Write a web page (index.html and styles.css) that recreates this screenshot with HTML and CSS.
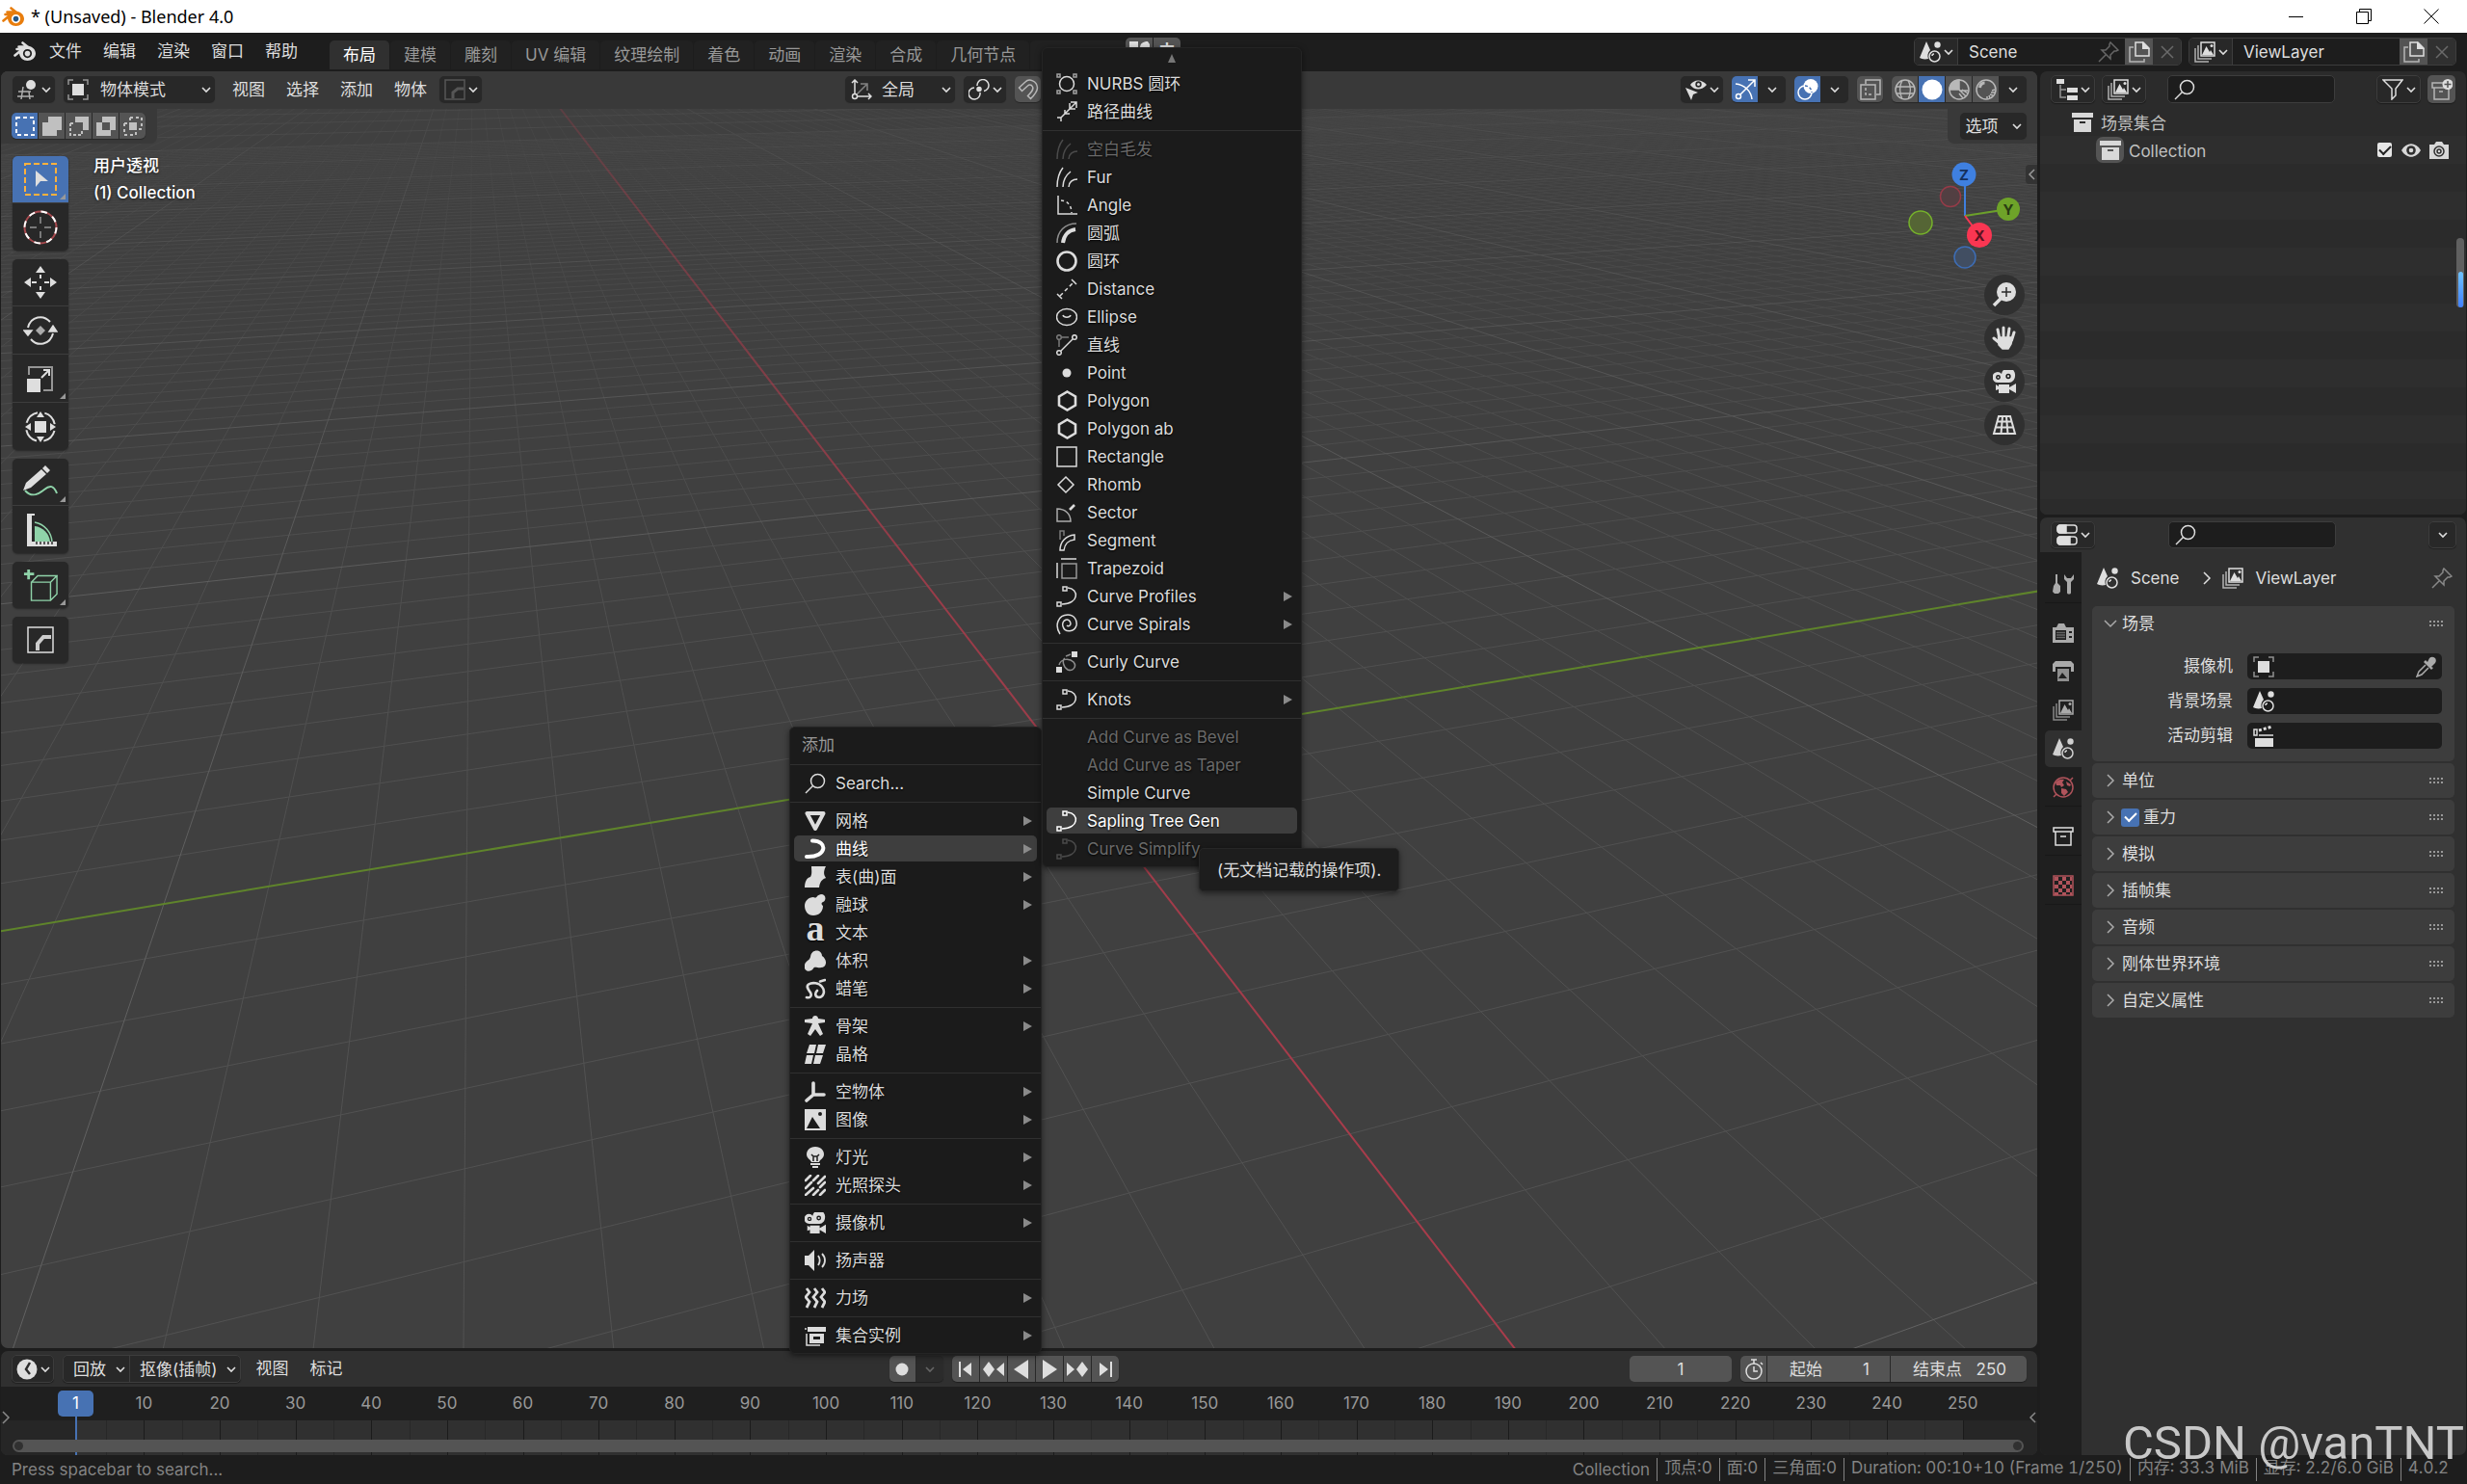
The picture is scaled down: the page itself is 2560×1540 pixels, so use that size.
FILE: index.html
```html
<!DOCTYPE html>
<html lang="zh-CN">
<head>
<meta charset="utf-8">
<title>* (Unsaved) - Blender 4.0</title>
<link rel="stylesheet" href="styles.css">
</head>
<body>
<svg class="sprite" aria-hidden="true">
  <symbol id="blender" viewBox="0 0 24 24"><path d="M1.500 16.500 9.500 10H3.500M5.500 7.500H14.500L9.500 3.500" fill="none" stroke="currentColor" stroke-width="2.600" stroke-linecap="round" stroke-linejoin="round"/><path d="M14 6.500C19 7 23 10 23 14.500S19 22 14.500 22 6.500 19 6 14.500C6 11 10 7 14 6.500ZM14.500 10A4.600 4.600 0 1 0 14.500 19.200 4.600 4.600 0 1 0 14.500 10Z" fill="currentColor" fill-rule="evenodd" stroke="none"/><circle class="pupil" cx="14.500" cy="14.600" r="2.800" stroke="none"/></symbol>
  <symbol id="chev" viewBox="0 0 10 10"><path d="M1 3 5 7 9 3" fill="none" stroke="currentColor" stroke-width="1.600"/></symbol>
  <symbol id="chev-right" viewBox="0 0 10 16"><path d="M2 2 8 8 2 14" fill="none" stroke="currentColor" stroke-width="1.500"/></symbol>
  <symbol id="chev-left" viewBox="0 0 10 16"><path d="M8 3 3 8 8 13" fill="none" stroke="currentColor" stroke-width="1.500"/></symbol>
  <symbol id="search" viewBox="0 0 22 22"><circle cx="13.500" cy="8.500" r="7"/><path d="M8.500 13.500 1 21"/></symbol>
  <symbol id="view3d" viewBox="0 0 22 22"><path d="M1 13H14M0 18H17M6 8 4 21M12 13 13 21" stroke-opacity=".75"/><circle cx="14" cy="6" r="5" fill="currentColor" stroke="none"/></symbol>
  <symbol id="object" viewBox="0 0 22 22"><path d="M1 6V1H6M16 1H21V6M21 16V21H16M6 21H1V16" stroke-opacity=".6"/><path d="M5 5H17V17H5Z" fill="currentColor" stroke="none"/></symbol>
  <symbol id="bevel" viewBox="0 0 22 22"><path d="M1 1H21V21H1Z"/><path d="M9 20V14L14 10H20" stroke-width="3"/></symbol>
  <symbol id="orient" viewBox="0 0 22 22"><path d="M4 16V1M1 4 4 1 7 4M6 18H21M18 15 21 18 18 21"/><circle cx="4" cy="18" r="2.500"/><path d="M6 16 16 6M10 5H17V12" stroke-opacity=".5"/></symbol>
  <symbol id="pivot" viewBox="0 0 22 22"><path d="M9 7A6 6 0 1 1 16 12.500M12 14A6 6 0 1 1 6 9"/><circle cx="11" cy="10.500" r="2" fill="currentColor"/></symbol>
  <symbol id="snap" viewBox="0 0 22 22"><path d="M1.500 9 8 3C12-1 20 2 20.500 9 20.500 13 17 17 13.500 20.500L10.500 17.500C14 14 17 11 15.500 8 14 5 11.500 6 10.500 7L4.500 12.500Z"/></symbol>
  <symbol id="eyecursor" viewBox="0 0 22 22"><path d="M5 6C9 0 17 0 22 6 17 12 9 12 5 6Z" fill="currentColor" stroke="none"/><circle cx="13.500" cy="5.500" r="3.200" fill="#2b2b2b" stroke="none"/><circle cx="13.500" cy="5.500" r="1.500" fill="currentColor" stroke="none"/><path d="M0 9 13 14 8 16 6 22Z" fill="currentColor" stroke="none"/></symbol>
  <symbol id="gizmo" viewBox="0 0 22 22"><path d="M1 5C10 6 17 12 18 21M6 16 21 1M14 1H21V8"/><circle cx="4" cy="18" r="2.500"/></symbol>
  <symbol id="overlay" viewBox="0 0 22 22"><circle cx="14" cy="7.500" r="7.500" fill="currentColor" stroke="none"/><circle cx="8" cy="14" r="7"/><path d="M8 7A7 7 0 0 1 15 14" stroke="#4772b3" stroke-dasharray="3 2"/></symbol>
  <symbol id="xray" viewBox="0 0 22 22"><path d="M1 6H16V21H1ZM6 5V1H21V16H17"/><path d="M6 9V16H12" stroke-dasharray="3 2"/></symbol>
  <symbol id="wire" viewBox="0 0 22 22"><circle cx="11" cy="11" r="10"/><path d="M1 8H21M2 15H20M8 1C5 7 5 15 8 21M14 1C17 7 17 15 14 21"/></symbol>
  <symbol id="solid" viewBox="0 0 22 22"><circle cx="11" cy="11" r="10.500" fill="currentColor" stroke="none"/></symbol>
  <symbol id="matprev" viewBox="0 0 22 22"><circle cx="11" cy="11" r="10"/><path d="M11 1V11H1C1 5 5 1 11 1Z" fill="currentColor"/><path d="M11 11 18 18M11 15 15 20M14 11 20 15M11 12H20"/></symbol>
  <symbol id="rendered" viewBox="0 0 22 22"><circle cx="11" cy="11" r="10"/><path d="M4.500 9C5 6 7 4 9.500 4" stroke-width="3"/><path d="M20 11 17 12M20 14 16 14M18 17 15 16M12 20V18M15 20 14 17"/></symbol>
  <symbol id="scene" viewBox="0 0 22 22"><path d="M7 0 11 9C8 12 8 15 9 18 5 19 2 18 0 17Z" fill="currentColor" stroke="none"/><circle cx="18.500" cy="3.500" r="3.200" fill="currentColor" stroke="none"/><circle cx="15.500" cy="15.500" r="5.500"/><path d="M13 15C13 14 14 13 15 13"/></symbol>
  <symbol id="viewlayer" viewBox="0 0 22 22"><path d="M7 1H21V15H7Z"/><path d="M8 14 12.500 5 16 11 17 9 20 14Z" fill="currentColor" stroke="none"/><circle cx="18" cy="4.500" r="1.500" fill="currentColor" stroke="none"/><path d="M4 4V18H18M1 7V21H15" stroke-opacity=".75"/></symbol>
  <symbol id="pin" viewBox="0 0 22 22"><path d="M13 1 21 9 19 10 17 10 13 14 13 18 4 9 8 9 12 5 12 3ZM8 14 1 21"/></symbol>
  <symbol id="copy" viewBox="0 0 22 22"><path d="M7 1H15L21 7V15H7Z"/><path d="M14 0 22 8H14Z" fill="currentColor" stroke="none"/><path d="M5 6H1V21H16V18" stroke-opacity=".7"/></symbol>
  <symbol id="x" viewBox="0 0 22 22"><path d="M5 5 17 17M17 5 5 17"/></symbol>
  <symbol id="outliner" viewBox="0 0 22 22"><path d="M0 0H8V5H0ZM11 9H22V14H11ZM11 17H22V22H11Z" fill="currentColor" stroke="none"/><path d="M4 6V19H10M4 11H10" stroke-opacity=".6"/></symbol>
  <symbol id="filter" viewBox="0 0 22 22"><path d="M1 1H21L14 10V17L10 21V10Z"/></symbol>
  <symbol id="newcol" viewBox="0 0 22 22"><path d="M12 4H1V9H20M3 9V21H18V10M8 13H12" stroke-opacity=".7"/><circle cx="17" cy="5.500" r="5.500" fill="currentColor" stroke="none"/><path d="M17 2V9M13.500 5.500H20.500" stroke="#545454"/></symbol>
  <symbol id="collection" viewBox="0 0 22 22"><path d="M0 1H22V6H0ZM2 8H20V21H2ZM8 10V12H14V10Z" fill="currentColor" fill-rule="evenodd" stroke="none"/></symbol>
  <symbol id="collection-o" viewBox="0 0 22 22"><path d="M1 2H21V6H1ZM3 6V20H19V6M8 11H14"/></symbol>
  <symbol id="eye" viewBox="0 0 22 22"><path d="M1 11C6 2 16 2 21 11 16 20 6 20 1 11Z" fill="currentColor" stroke="none"/><circle cx="11" cy="11" r="4.800" fill="#2e2e2e" stroke="none"/><circle cx="11" cy="11" r="2.300" fill="currentColor" stroke="none"/></symbol>
  <symbol id="photo" viewBox="0 0 22 22"><path d="M1 5H6L8 2H14L16 5H21V20H1Z" fill="currentColor" stroke="none"/><circle cx="11" cy="12" r="5" stroke="#2e2e2e"/><circle cx="11" cy="12" r="2" stroke="#2e2e2e"/></symbol>
  <symbol id="props" viewBox="0 0 22 22"><rect x="1" y="1" width="20" height="8" rx="3"/><path d="M4 1H10V9H4C0 9 0 1 4 1ZM4 13H14V21H4C0 21 0 13 4 13Z" fill="currentColor"/><rect x="1" y="13" width="20" height="8" rx="3"/></symbol>
  <symbol id="tool" viewBox="0 0 22 22"><path d="M3 1H5V10H3ZM1 13 3 10H5L8 13V19L6 21H2L0 19Z" fill="currentColor" stroke="none"/><path d="M12 1V6L15 9V20C15 22 19 22 19 20V9L22 6V1L19 5H15Z" fill="currentColor" stroke="none"/></symbol>
  <symbol id="render" viewBox="0 0 22 22"><path d="M0 5H4L6 1H12L14 5H22V21H0ZM3 8V18H14V8ZM17 9H20V11H17ZM17 14H20V16H17Z" fill="currentColor" fill-rule="evenodd" stroke="none"/><path d="M4 10.500H13M4 13H13M4 15.500H13" stroke-opacity=".5"/></symbol>
  <symbol id="printer" viewBox="0 0 22 22"><path d="M0 3 3 0H19L22 3V11H19V6H3V11H0Z" fill="currentColor" stroke="none"/><path d="M5 8H17V21H5ZM6 18 10 12 15 18Z" fill="currentColor" fill-opacity=".8" fill-rule="evenodd" stroke="none"/></symbol>
  <symbol id="world" viewBox="0 0 22 22"><circle cx="11" cy="11" r="10"/><path d="M3 6C5 3 9 2 12 3L10 6 12 9 9 11 8 9 4 9ZM9 12 14 13 16 16 12 20 9 17ZM14 5 19 8 18 10 15 9Z" fill="currentColor" stroke="none"/><path d="M18 4 21 1M4 18 1 21"/></symbol>
  <symbol id="texture" viewBox="0 0 22 22"><path d="M1 1H21V21H1Z"/><path d="M2 2H6V6H2ZM10 2H14V6H10ZM6 6H10V10H6ZM14 6H18V10H14ZM2 10H6V14H2ZM10 10H14V14H10ZM6 14H10V18H6ZM14 14H18V18H14ZM2 18H6V21H2ZM10 18H14V21H10ZM18 2H20V6H18ZM18 10H20V14H18ZM18 18H20V21H18Z" fill="currentColor" stroke="none"/></symbol>
  <symbol id="dropper" viewBox="0 0 22 22"><path d="M14 2C17-1 23 2 20 7L16 11 18 12 16 14 8 6 10 4 12 6Z" fill="currentColor" stroke="none"/><path d="M10 9 3 16 1 21 6 19 13 12"/></symbol>
  <symbol id="clip" viewBox="0 0 22 22"><path d="M2 13H21V22H2Z" fill="currentColor" stroke="none"/><path d="M6 10H21M1 4H4V10H1Z"/><path d="M6 5 20 1" stroke-width="3" stroke-dasharray="3 2"/></symbol>
  <symbol id="clock" viewBox="0 0 22 22"><circle cx="11" cy="11" r="10.500" fill="currentColor" stroke="none"/><path d="M14 4 10 11 14 16" stroke="#2b2b2b" stroke-width="2.500"/></symbol>
  <symbol id="stopwatch" viewBox="0 0 22 22"><circle cx="11" cy="13" r="8"/><path d="M8 1H14M11 1V5M18 4 20 6M11 8V13H15"/></symbol>

  <symbol id="nurbs" viewBox="0 0 22 22"><circle cx="11" cy="11" r="7.500"/><path d="M1 1H4V4H1ZM18 1H21V4H18ZM1 18H4V21H1ZM18 18H21V21H18Z" stroke-opacity=".7"/></symbol>
  <symbol id="path" viewBox="0 0 22 22"><path d="M5 17 21 1M15 1H21V7M14 2V8H20M9 13V9M9 13H14M1 17H5V21"/></symbol>
  <symbol id="fur" viewBox="0 0 22 22"><path d="M1 21C1 13 3 6 7 1M7 21C7 14 10 9 15 5M13 21C13 16 17 13 22 13"/></symbol>
  <symbol id="angle" viewBox="0 0 22 22"><path d="M2 1V20H22"/><path d="M5 6C12 6 16 12 16 19" stroke-dasharray="3 3"/></symbol>
  <symbol id="arc" viewBox="0 0 22 22"><path d="M1 21C1 9 9 1 21 1" stroke-opacity=".6"/><path d="M7 21C8 13 13 8 20 7" stroke-width="4"/></symbol>
  <symbol id="ring" viewBox="0 0 22 22"><circle cx="11" cy="11" r="9.500" stroke-width="2.600"/></symbol>
  <symbol id="distance" viewBox="0 0 22 22"><path d="M16 1 21 6M1 16 6 21"/><path d="M4 18 19 3" stroke-dasharray="4 3"/></symbol>
  <symbol id="ellipse" viewBox="0 0 22 22"><ellipse cx="11" cy="11" rx="10.500" ry="8.500"/><path d="M7 9C8 12 14 12 15 9"/></symbol>
  <symbol id="line" viewBox="0 0 22 22"><path d="M5 17 17 5"/><circle cx="3" cy="19" r="2.300"/><circle cx="19" cy="3" r="2.300"/><path d="M6 3H13M3 6V13" stroke-opacity=".5"/><circle cx="3" cy="3" r="2.300" stroke-opacity=".5"/></symbol>
  <symbol id="point" viewBox="0 0 22 22"><circle cx="11" cy="11" r="4.500" fill="currentColor" stroke="none"/></symbol>
  <symbol id="hex" viewBox="0 0 22 22"><path d="M11.500 1.500 20 6.500V15.500L11.500 20.500 3 15.500V6.500Z" stroke-width="2.600"/></symbol>
  <symbol id="rect" viewBox="0 0 22 22"><path d="M1 1H21V21H1Z"/></symbol>
  <symbol id="rhomb" viewBox="0 0 22 22"><path d="M10 3 18 11 10 19 2 11Z"/></symbol>
  <symbol id="sector" viewBox="0 0 22 22"><path d="M1 7C9 7 15 12 15 20H1Z" stroke-opacity=".75"/><path d="M14 8 19 3" stroke-width="2.600"/></symbol>
  <symbol id="segment" viewBox="0 0 22 22"><path d="M4 21C4 12 10 6 19 5V10C12 11 9 14 8 21Z"/><path d="M4 10V1H8V6" stroke-opacity=".5"/></symbol>
  <symbol id="trapezoid" viewBox="0 0 22 22"><path d="M5 1H21M1 5V21"/><path d="M6 6H21V21H6Z" stroke-opacity=".65"/></symbol>
  <symbol id="curve" viewBox="0 0 22 22"><path d="M7 1H11V5H7ZM1 17H5V21H1Z"/><path d="M12 2C24 3 24 19 6 19"/></symbol>
  <symbol id="spiral" viewBox="0 0 22 22"><path d="M4 21C-2 12 2 1 12 1 19 1 22 7 21 12 19 19 9 20 7 13 5 6 14 3 15 10 15 13 12 13 11 12"/></symbol>
  <symbol id="curly" viewBox="0 0 22 22"><path d="M16 0H22V6H16ZM0 16H6V22H0Z" fill="currentColor" stroke="none"/><path d="M3 14C5 7 14 7 18 11 22 16 17 21 12 19 7 16 6 9 9 7M10 5 15 3" stroke-opacity=".6"/></symbol>

  <symbol id="mesh" viewBox="0 0 22 22"><path d="M2.500 3H19.500L11 19Z" stroke-width="4" stroke-linejoin="round"/></symbol>
  <symbol id="curve-b" viewBox="0 0 22 22"><path d="M8 2.500C24 2 24 20 2 19" stroke-width="4" stroke-linecap="round"/></symbol>
  <symbol id="surface" viewBox="0 0 22 22"><path d="M7 0H22C19 6 20 9 22 12 20 13 16 14 15 22H0C0 16 2 12 6 11 8 8 7 4 7 0Z" fill="currentColor" stroke="none"/></symbol>
  <symbol id="meta" viewBox="0 0 22 22"><path d="M9 3C14 5 11 1 17 0 22 0 23 6 19 8 17 9 17 10 19 12 19 18 15 22 9 22 3 22 0 17 0 12S4 3 9 3Z" fill="currentColor" stroke="none"/></symbol>
  <symbol id="volume" viewBox="0 0 22 22"><path d="M6 7C7-2 18-1 18 6 24 10 23 18 17 18 14 19 10 16 9 19 6 24-2 22 0 15 1 11 5 11 6 7Z" fill="currentColor" stroke="none"/></symbol>
  <symbol id="gp" viewBox="0 0 22 22"><path d="M2 20C5 21 8 19 6 15 4 12 1 9 4 6.500 8 4 15 5 18 9 22 14 19 20 15 20 11 20 10 16 13 13M16 3.500 21 2" stroke-width="2.600" stroke-linecap="round"/></symbol>
  <symbol id="armature" viewBox="0 0 22 22"><path d="M8 3C8-1 14-1 14 3L21 4V7L14 8 19 19 16 21 11 14 6 21 3 19 8 8 0 7V4Z" fill="currentColor" stroke="none"/></symbol>
  <symbol id="lattice" viewBox="0 0 22 22"><path d="M5 1H12L10 10H2ZM14 1H22L19 10H12ZM2 12H9L7 21H0ZM11 12H19L16 21H9Z" fill="currentColor" stroke="none"/></symbol>
  <symbol id="empty" viewBox="0 0 22 22"><path d="M9 2V14H20M9 14 2 20" stroke-width="3.600" stroke-linecap="round"/></symbol>
  <symbol id="image" viewBox="0 0 22 22"><path d="M0 0H22V22H0ZM2 20H16L8 8ZM14 5A2 2 0 1 0 18 5 2 2 0 1 0 14 5Z" fill="currentColor" fill-rule="evenodd" stroke="none"/></symbol>
  <symbol id="light" viewBox="0 0 22 22"><path d="M11 0C17 0 20 4 20 8S16 13 15 16H7C6 13 2 12 2 8S5 0 11 0Z" fill="currentColor" stroke="none"/><path d="M7 8 9 10H13L15 8M9 10V15M13 10V15" stroke="#1d1d1d"/><path d="M6 18H16M8 21H14" stroke-width="1.800"/></symbol>
  <symbol id="probe" viewBox="0 0 22 22"><path d="M1 6 6 1M1 14 7 8M9 6 14 1M1 21 9 14M14 9 21 2M9 21 14 16M16 13 21 8M16 21 21 16" stroke-width="2.600" stroke-linecap="round"/></symbol>
  <symbol id="camera" viewBox="0 0 24 24"><path d="M5 2A5 5 0 0 1 9 4 7 7 0 0 1 23 6C23 10 20 13 17 13H5A5.500 5.500 0 0 1 5 2ZM6 15H17V18L24 14V24L17 20V24H6V20L3 21V15L6 17Z" fill="currentColor" stroke="none"/><circle cx="5.500" cy="7.500" r="1.700" stroke="#1d1d1d"/><circle cx="16" cy="6.500" r="1.900" stroke="#1d1d1d"/></symbol>
  <symbol id="speaker" viewBox="0 0 22 22"><path d="M0 6H4L10 0V22L4 16H0Z" fill="currentColor" stroke="none"/><path d="M14 6C16 9 16 13 14 16M18 4C22 8 22 14 18 18" stroke-width="1.800"/></symbol>
  <symbol id="force" viewBox="0 0 22 22"><path d="M2 1 5 5 1 10 5 15 2 21M10 1 13 5 9 10 13 15 10 21M18 1 21 5 17 10 21 15 18 21" stroke-width="2.800"/></symbol>
  <symbol id="instance" viewBox="0 0 22 22"><path d="M3 2H22V7H3ZM5 9H20V19H5ZM9 12V15H16V12Z" fill="currentColor" fill-rule="evenodd" stroke="none"/><path d="M0 4H2M2 9V21H16"/></symbol>

  <symbol id="t-select" viewBox="0 0 36 36"><rect x="2" y="2" width="32" height="32" stroke="#ffb13d" stroke-width="2" stroke-dasharray="6 3"/><path d="M13 9 26 20 18 20 13 26Z" fill="currentColor" stroke="none"/></symbol>
  <symbol id="t-cursor" viewBox="0 0 36 36"><circle cx="18" cy="18" r="16.500" stroke="#a84a4f" stroke-width="2"/><circle cx="18" cy="18" r="16.500" stroke="#fff" stroke-width="2" stroke-dasharray="6.500 6.460"/><path d="M18 7V14M18 22V29M7 18H14M22 18H29" stroke-opacity=".6"/></symbol>
  <symbol id="t-move" viewBox="0 0 36 36"><path d="M18 1 23 8H13ZM18 35 23 28H13ZM1 18 8 13V23ZM35 18 28 13V23Z" fill="currentColor" stroke="none"/><path d="M18 10V14M18 22V26M9 18H14M22 18H27" stroke-width="2"/></symbol>
  <symbol id="t-rotate" viewBox="0 0 36 36"><path d="M5 15C8 3 21 1 28 9M31 21C28 33 15 35 8 27" stroke-width="2"/><path d="M1 18H9L5 23ZM27 19H35L31 13Z" fill="currentColor"/><path d="M18 13 23 18 18 23 13 18Z" fill="#aaa" stroke="none"/></symbol>
  <symbol id="t-scale" viewBox="0 0 36 36"><path d="M6 14V6H30V30H21" stroke-opacity=".6" stroke-width="2"/><path d="M4 18H18V32H4Z" fill="currentColor" stroke="none"/><path d="M19 17 27 9M21 9H27V15" stroke-width="2"/></symbol>
  <symbol id="t-transform" viewBox="0 0 36 36"><circle cx="18" cy="18" r="15" stroke-dasharray="16 7.560" stroke-dashoffset="-4" stroke-width="2"/><path d="M12 12H24V24H12ZM18 2 22 8H14ZM18 34 22 28H14ZM2 18 8 14V22ZM34 18 28 14V22Z" fill="currentColor" stroke="none"/></symbol>
  <symbol id="t-annotate" viewBox="0 0 36 36"><path d="M2 27C9 35 16 31 22 26S32 22 35 30" stroke="#8fd3a9" stroke-width="2"/><path d="M0 27 3 19 19 5 24 10 8 24ZM20 4 23 1 28 6 25 9Z" fill="currentColor" stroke="none"/></symbol>
  <symbol id="t-measure" viewBox="0 0 36 36"><path d="M12 10A22 22 0 0 1 30 31" stroke="#8fd3a9" stroke-width="1.500"/><path d="M12 14A18 18 0 0 1 28 30H12Z" fill="#8fd3a9" stroke="none"/><path d="M4 1H12V3H9V30H35V35H4Z" fill="currentColor" stroke="none"/><path d="M9 7H12M9 11H12M9 15H12M9 19H12M9 23H12M14 33V30M18 33V30M22 33V30M26 33V30M30 33V30" stroke="#2b2b2b"/></symbol>
  <symbol id="t-cube" viewBox="-2 0 38 36"><g stroke="#8fd3a9"><path d="M7 15H28V35H7ZM7 15 14 8H35L28 15M35 8V28L28 35"/><path d="M4 1V12M-1 6H10" stroke-width="3"/></g></symbol>
  <symbol id="t-bevel" viewBox="0 0 36 36"><path d="M5 5H31V31H5Z"/><path d="M15 29V22L21 15H29" stroke="#ccc" stroke-width="4"/></symbol>
</svg>

<header class="titlebar">
  <svg class="i app-logo"><use href="#blender"/></svg>
  <h1>* (Unsaved) - Blender 4.0</h1>
  <div class="win-buttons">
    <button aria-label="Minimize"><svg width="16" height="16"><path d="M0 8.500H15"/></svg></button>
    <button aria-label="Restore"><svg width="16" height="16"><path d="M.5 3.500H12.500V15.500H.5ZM3.500 3V.5H15.500V12.500H13"/></svg></button>
    <button aria-label="Close"><svg width="16" height="16"><path d="M.5.5 15.500 15.500M15.500.5.5 15.500"/></svg></button>
  </div>
</header>

<div class="topbar">
  <button class="logo" aria-label="Blender"><svg class="i big"><use href="#blender"/></svg></button>
  <nav class="menus"><button>文件</button><button>编辑</button><button>渲染</button><button>窗口</button><button>帮助</button></nav>
  <nav class="tabs"><button class="on">布局</button><button>建模</button><button>雕刻</button><button>UV 编辑</button><button>纹理绘制</button><button>着色</button><button>动画</button><button>渲染</button><button>合成</button><button>几何节点</button><button>Scripting</button></nav>
  <div class="ime"><button aria-label="Input method"><svg class="i fill"><path d="M1 1H10V8H12C12 3 15 1 20 1L22 4V21H1Z"/></svg></button><button>中</button></div>
  <div class="idblock scene">
    <button class="dd" aria-label="Browse scenes"><svg class="i"><use href="#scene"/></svg><svg class="c"><use href="#chev"/></svg></button>
    <input aria-label="Scene name" value="Scene"><svg class="i pin"><use href="#pin"/></svg>
    <button class="new" aria-label="New scene"><svg class="i"><use href="#copy"/></svg></button><button class="del" aria-label="Delete scene"><svg class="i"><use href="#x"/></svg></button>
  </div>
  <div class="idblock layer">
    <button class="dd" aria-label="Browse layers"><svg class="i"><use href="#viewlayer"/></svg><svg class="c"><use href="#chev"/></svg></button>
    <input aria-label="View layer name" value="ViewLayer">
    <button class="new" aria-label="New layer"><svg class="i"><use href="#copy"/></svg></button><button class="del" aria-label="Delete layer"><svg class="i"><use href="#x"/></svg></button>
  </div>
</div>

<main class="workspace">
  <div class="left">
    <section class="viewport" id="viewport">
      <svg class="floor" id="floor" aria-hidden="true">
        <defs>
          <linearGradient id="fade" x1="0" y1="0" x2="0" y2="1"><stop offset="0" stop-color="#fff" stop-opacity=".2"/><stop offset=".12" stop-color="#fff" stop-opacity=".45"/><stop offset=".4" stop-color="#fff" stop-opacity=".85"/><stop offset=".8" stop-color="#fff"/></linearGradient>
          <mask id="fademask" maskUnits="userSpaceOnUse" x="0" y="0" width="100%" height="100%"><rect width="100%" height="100%" fill="url(#fade)" stroke="none"/></mask>
        </defs>
        <g mask="url(#fademask)"><path class="minor" id="minor"/></g>
        <g mask="url(#fademask)"><path class="major" id="major"/></g>
        <g mask="url(#fademask)"><path class="axis-x" id="axis-x"/></g>
        <path class="axis-y" id="axis-y"/>
      </svg>
      <div class="vhead">
        <button class="box dd" aria-label="Editor type"><svg class="i"><use href="#view3d"/></svg><svg class="c"><use href="#chev"/></svg></button>
        <button class="box mode"><svg class="i"><use href="#object"/></svg><span>物体模式</span><svg class="c"><use href="#chev"/></svg></button>
        <nav class="menus"><button>视图</button><button>选择</button><button>添加</button><button>物体</button></nav>
        <button class="box dd dim" aria-label="Bevel options"><svg class="i"><use href="#bevel"/></svg><svg class="c"><use href="#chev"/></svg></button>
        <div class="grow-a"></div>
        <button class="box orient"><svg class="i"><use href="#orient"/></svg><span>全局</span><svg class="c"><use href="#chev"/></svg></button>
        <button class="box dd" aria-label="Pivot"><svg class="i"><use href="#pivot"/></svg><svg class="c"><use href="#chev"/></svg></button>
        <button class="box tog snap" aria-label="Snap"><svg class="i"><use href="#snap"/></svg></button>
        <div class="grow-b"></div>
        <button class="box dd" aria-label="Visibility"><svg class="i"><use href="#eyecursor"/></svg><svg class="c"><use href="#chev"/></svg></button>
        <div class="group"><button class="tog on" aria-label="Gizmos"><svg class="i"><use href="#gizmo"/></svg></button><button aria-label="Gizmo options"><svg class="c"><use href="#chev"/></svg></button></div>
        <div class="group"><button class="tog on" aria-label="Overlays"><svg class="i"><use href="#overlay"/></svg></button><button aria-label="Overlay options"><svg class="c"><use href="#chev"/></svg></button></div>
        <button class="box tog" aria-label="X-ray"><svg class="i"><use href="#xray"/></svg></button>
        <div class="group"><button class="tog" aria-label="Wireframe"><svg class="i"><use href="#wire"/></svg></button><button class="tog on" aria-label="Solid"><svg class="i"><use href="#solid"/></svg></button><button class="tog" aria-label="Material"><svg class="i"><use href="#matprev"/></svg></button><button class="tog" aria-label="Rendered"><svg class="i"><use href="#rendered"/></svg></button><button aria-label="Shading options"><svg class="c"><use href="#chev"/></svg></button></div>
      </div>
      <div class="vtools">
        <div class="corner tl"><div class="group sel">
          <button class="tog on" aria-label="Set"><svg class="i"><rect x="2" y="2" width="18" height="18" stroke-dasharray="4 3" stroke-width="2"/></svg></button>
          <button class="tog" aria-label="Extend"><svg class="i fill"><path d="M7 1H21V15H16V21H1V7H7Z"/></svg></button>
          <button class="tog" aria-label="Subtract"><svg class="i"><path class="f" d="M7 1H21V15H15V7H7Z"/><path d="M2 8V20H14V16M2 8H7" stroke-dasharray="3 2" stroke-width="2"/></svg></button>
          <button class="tog" aria-label="Difference"><svg class="i fill"><path fill-rule="evenodd" d="M7 1H21V15H16V21H1V7H7ZM7 7V15H15V7Z"/></svg></button>
          <button class="tog" aria-label="Intersect"><svg class="i"><path class="f" d="M7 7H15V15H7Z"/><path d="M8 2H20V14H17M2 8V20H14V17M8 2V5M2 8H5" stroke-dasharray="3 3" stroke-width="2"/></svg></button>
        </div></div>
        <div class="corner tr"><button class="box opt">选项<svg class="c"><use href="#chev"/></svg></button></div>
      </div>
      <div class="vbody">
        <div class="toolbar">
          <div class="tg"><button class="on more" aria-label="Select box"><svg class="t"><use href="#t-select"/></svg></button><button aria-label="Cursor"><svg class="t"><use href="#t-cursor"/></svg></button></div>
          <div class="tg"><button aria-label="Move"><svg class="t"><use href="#t-move"/></svg></button><button aria-label="Rotate"><svg class="t"><use href="#t-rotate"/></svg></button><button class="more" aria-label="Scale"><svg class="t"><use href="#t-scale"/></svg></button><button aria-label="Transform"><svg class="t"><use href="#t-transform"/></svg></button></div>
          <div class="tg"><button class="more" aria-label="Annotate"><svg class="t"><use href="#t-annotate"/></svg></button><button aria-label="Measure"><svg class="t"><use href="#t-measure"/></svg></button></div>
          <div class="tg"><button class="more" aria-label="Add cube"><svg class="t"><use href="#t-cube"/></svg></button></div>
          <div class="tg"><button aria-label="Bevel"><svg class="t"><use href="#t-bevel"/></svg></button></div>
        </div>
        <div class="vinfo"><p>用户透视</p><p>(1) Collection</p></div>
        <div class="nav">
          <svg class="axes" width="121" height="114">
            <circle cx="44" cy="39" r="10.500" fill="#523f42" stroke="#953b48"/><circle cx="59" cy="102" r="11" fill="#414e62" stroke="#3d6db5"/><circle cx="13" cy="66" r="12" fill="#556535" stroke="#76b22b"/>
            <g stroke-width="2"><path d="M59 59V16" stroke="#3f7fde"/><path d="M59 59 104 52" stroke="#6ca02b"/><path d="M59 59 74 79" stroke="#f93754"/></g>
            <g stroke="none"><circle cx="58" cy="16" r="12.500" fill="#3f80e0"/><circle cx="104" cy="52" r="12" fill="#6ea329"/><circle cx="74" cy="79" r="13" fill="#fa3652"/></g>
            <text x="58" y="22" fill="#15305c">Z</text><text x="104" y="58" fill="#293d12">Y</text><text x="74" y="85" fill="#5c1220">X</text>
          </svg>
          <button aria-label="Zoom"><svg width="26" height="26"><circle cx="15" cy="10" r="10" fill="currentColor" stroke="none"/><path d="M9 17 2 24" stroke-width="3.500"/><path d="M15 5V15M10 10H20" stroke="#2b2b2b"/></svg></button>
          <button aria-label="Pan"><svg width="26" height="26"><path d="M8 14 6 4M12 13V2M16.500 13 18 3M20.500 15 23 7M8 18 2 13" stroke-width="3" stroke-linecap="round"/><path d="M6.500 12H21.500L20 19 17 24H11L7 20Z" fill="currentColor"/></svg></button>
          <button aria-label="Camera view"><svg class="i cam"><use href="#camera"/></svg></button>
          <button aria-label="Perspective"><svg width="26" height="26"><path d="M7 4H19L24 22H2ZM5.500 9.500H20.500M4 15.500H22M11 4 9.500 22M15 4 16.500 22" stroke-width="2"/></svg></button>
        </div>
      </div>
      <button class="sidetab" aria-label="Sidebar"><svg width="10" height="16"><use href="#chev-left"/></svg></button>
    </section>

    <section class="timeline">
      <div class="thead">
        <button class="box dd line" aria-label="Editor type"><svg class="i"><use href="#clock"/></svg><svg class="c"><use href="#chev"/></svg></button>
        <div class="group line"><button class="txt">回放<svg class="c"><use href="#chev"/></svg></button><button class="txt">抠像(插帧)<svg class="c"><use href="#chev"/></svg></button></div>
        <nav class="menus"><button>视图</button><button>标记</button></nav>
        <div class="grow-c"></div>
        <div class="group rec"><button class="tog" aria-label="Auto keying"><svg class="i"><circle class="f" cx="11" cy="11" r="6.500"/></svg></button><button class="off" aria-label="Keying options"><svg class="c"><use href="#chev"/></svg></button></div>
        <div class="group play">
          <button class="tog" aria-label="First"><svg class="i fill"><path d="M4 3H6V19H4ZM17 4V18L8 11Z"/></svg></button>
          <button class="tog" aria-label="Previous key"><svg class="i fill"><path d="M6 3 12 11 6 19 0 11ZM22 4V18L14 11Z"/></svg></button>
          <button class="tog" aria-label="Play reverse"><svg class="i fill"><path d="M18 1V21L3 11Z"/></svg></button>
          <button class="tog" aria-label="Play"><svg class="i fill"><path d="M4 1V21L19 11Z"/></svg></button>
          <button class="tog" aria-label="Next key"><svg class="i fill"><path d="M16 3 22 11 16 19 10 11ZM0 4V18L8 11Z"/></svg></button>
          <button class="tog" aria-label="Last"><svg class="i fill"><path d="M16 3H18V19H16ZM5 4V18L14 11Z"/></svg></button>
        </div>
        <div class="grow-d"></div>
        <input class="frame" aria-label="Current frame" value="1">
        <div class="group range"><button class="tog" aria-label="Preview range"><svg class="i"><use href="#stopwatch"/></svg></button><label>起始<input value="1"></label><label class="end">结束点<input value="250"></label></div>
      </div>
      <div class="track">
        <div class="ruler"><span>10</span><span>20</span><span>30</span><span>40</span><span>50</span><span>60</span><span>70</span><span>80</span><span>90</span><span>100</span><span>110</span><span>120</span><span>130</span><span>140</span><span>150</span><span>160</span><span>170</span><span>180</span><span>190</span><span>200</span><span>210</span><span>220</span><span>230</span><span>240</span><span>250</span></div>
        <div class="lanes"><i></i><i></i><i></i><i></i><i></i><i></i><i></i><i></i><i></i><i></i><i></i><i></i><i></i><i></i><i></i><i></i><i></i><i></i><i></i><i></i><i></i><i></i><i></i><i></i><i class="last"></i></div>
        <div class="playhead"><span>1</span></div>
        <div class="hscroll"></div>
        <svg class="edge l" width="10" height="16"><use href="#chev-right"/></svg>
        <svg class="edge r" width="10" height="16"><use href="#chev-left"/></svg>
      </div>
    </section>
  </div>

  <aside class="right">
    <section class="outliner">
      <div class="ohead">
        <button class="box dd line" aria-label="Editor type"><svg class="i"><use href="#outliner"/></svg><svg class="c"><use href="#chev"/></svg></button>
        <button class="box dd line" aria-label="Display mode"><svg class="i"><use href="#viewlayer"/></svg><svg class="c"><use href="#chev"/></svg></button>
        <label class="find"><svg class="i"><use href="#search"/></svg><input aria-label="Filter"></label>
        <button class="box dd line" aria-label="Filters"><svg class="i"><use href="#filter"/></svg><svg class="c"><use href="#chev"/></svg></button>
        <button class="box tog sq" aria-label="New collection"><svg class="i"><use href="#newcol"/></svg></button>
      </div>
      <div class="tree">
        <div class="row root"><svg class="i"><use href="#collection"/></svg><span class="name">场景集合</span></div>
        <div class="row child"><b><svg class="i"><use href="#collection"/></svg></b><span class="name">Collection</span>
          <span class="toggles"><input type="checkbox" class="check light" checked aria-label="Include"><button aria-label="Hide"><svg class="i"><use href="#eye"/></svg></button><button aria-label="Render"><svg class="i"><use href="#photo"/></svg></button></span></div>
      </div>
      <div class="vscroll"><i></i></div>
    </section>

    <section class="props">
      <div class="phead">
        <button class="box dd line" aria-label="Editor type"><svg class="i"><use href="#props"/></svg><svg class="c"><use href="#chev"/></svg></button>
        <label class="find"><svg class="i"><use href="#search"/></svg><input aria-label="Search properties"></label>
        <button class="box line sq" aria-label="Options"><svg class="c"><use href="#chev"/></svg></button>
      </div>
      <div class="pbody">
        <nav class="ptabs">
          <div class="pt"><button aria-label="Tool"><svg class="i"><use href="#tool"/></svg></button></div>
          <div class="pt"><button aria-label="Render"><svg class="i"><use href="#render"/></svg></button><button aria-label="Output"><svg class="i"><use href="#printer"/></svg></button><button aria-label="View layer"><svg class="i"><use href="#viewlayer"/></svg></button><button class="on" aria-label="Scene"><svg class="i"><use href="#scene"/></svg></button><button class="red" aria-label="World"><svg class="i"><use href="#world"/></svg></button></div>
          <div class="pt"><button class="lit" aria-label="Collection"><svg class="i"><use href="#collection-o"/></svg></button></div>
          <div class="pt"><button class="red" aria-label="Texture"><svg class="i"><use href="#texture"/></svg></button></div>
        </nav>
        <div class="panels">
          <div class="crumbs"><svg class="i"><use href="#scene"/></svg><span>Scene</span><svg class="sep" width="10" height="16"><use href="#chev-right"/></svg><svg class="i"><use href="#viewlayer"/></svg><span>ViewLayer</span><svg class="i pin"><use href="#pin"/></svg></div>
          <div class="panel open">
            <button class="ph"><svg class="arr"><use href="#chev-right"/></svg>场景<em></em></button>
            <div class="fields">
              <label for="f1">摄像机</label><div class="field"><svg class="i"><use href="#object"/></svg><input id="f1"><svg class="i drop"><use href="#dropper"/></svg></div>
              <label for="f2">背景场景</label><div class="field"><svg class="i"><use href="#scene"/></svg><input id="f2"></div>
              <label for="f3">活动剪辑</label><div class="field"><svg class="i"><use href="#clip"/></svg><input id="f3"></div>
            </div>
          </div>
          <div class="panel"><button class="ph"><svg class="arr"><use href="#chev-right"/></svg>单位<em></em></button></div>
          <div class="panel"><div class="ph"><svg class="arr"><use href="#chev-right"/></svg><input type="checkbox" class="check blue" id="grav" checked><label for="grav">重力</label><em></em></div></div>
          <div class="panel"><button class="ph"><svg class="arr"><use href="#chev-right"/></svg>模拟<em></em></button></div>
          <div class="panel"><button class="ph"><svg class="arr"><use href="#chev-right"/></svg>插帧集<em></em></button></div>
          <div class="panel"><button class="ph"><svg class="arr"><use href="#chev-right"/></svg>音频<em></em></button></div>
          <div class="panel"><button class="ph"><svg class="arr"><use href="#chev-right"/></svg>刚体世界环境<em></em></button></div>
          <div class="panel"><button class="ph"><svg class="arr"><use href="#chev-right"/></svg>自定义属性<em></em></button></div>
        </div>
      </div>
    </section>
  </aside>
</main>

<footer class="status"><span>Press spacebar to search...</span><span class="stats"><span>Collection</span><span>顶点:0</span><span>面:0</span><span>三角面:0</span><span>Duration: 00:10+10 (Frame 1/250)</span><span>内存: 33.3 MiB</span><span>显存: 2.2/6.0 GiB</span><span>4.0.2</span></span></footer>

<div class="popup add-menu">
  <p class="title">添加</p><hr>
  <button><svg class="i"><use href="#search"/></svg>Search...</button><hr>
  <button class="sub"><svg class="i"><use href="#mesh"/></svg>网格</button>
  <button class="sub hot"><svg class="i"><use href="#curve-b"/></svg>曲线</button>
  <button class="sub"><svg class="i"><use href="#surface"/></svg>表(曲)面</button>
  <button class="sub"><svg class="i"><use href="#meta"/></svg>融球</button>
  <button><span class="glyph">a</span>文本</button>
  <button class="sub"><svg class="i"><use href="#volume"/></svg>体积</button>
  <button class="sub"><svg class="i"><use href="#gp"/></svg>蜡笔</button><hr>
  <button class="sub"><svg class="i"><use href="#armature"/></svg>骨架</button>
  <button><svg class="i"><use href="#lattice"/></svg>晶格</button><hr>
  <button class="sub"><svg class="i"><use href="#empty"/></svg>空物体</button>
  <button class="sub"><svg class="i"><use href="#image"/></svg>图像</button><hr>
  <button class="sub"><svg class="i"><use href="#light"/></svg>灯光</button>
  <button class="sub"><svg class="i"><use href="#probe"/></svg>光照探头</button><hr>
  <button class="sub"><svg class="i"><use href="#camera"/></svg>摄像机</button><hr>
  <button><svg class="i"><use href="#speaker"/></svg>扬声器</button><hr>
  <button class="sub"><svg class="i"><use href="#force"/></svg>力场</button><hr>
  <button class="sub"><svg class="i"><use href="#instance"/></svg>集合实例</button>
</div>

<div class="popup curve-menu">
  <div class="up"><svg width="10" height="10"><path class="f" d="M5 0 9 9H1Z"/></svg></div>
  <button><svg class="i"><use href="#nurbs"/></svg>NURBS 圆环</button>
  <button><svg class="i"><use href="#path"/></svg>路径曲线</button><hr>
  <button disabled><svg class="i"><use href="#fur"/></svg>空白毛发</button>
  <button><svg class="i"><use href="#fur"/></svg>Fur</button>
  <button><svg class="i"><use href="#angle"/></svg>Angle</button>
  <button><svg class="i"><use href="#arc"/></svg>圆弧</button>
  <button><svg class="i"><use href="#ring"/></svg>圆环</button>
  <button><svg class="i"><use href="#distance"/></svg>Distance</button>
  <button><svg class="i"><use href="#ellipse"/></svg>Ellipse</button>
  <button><svg class="i"><use href="#line"/></svg>直线</button>
  <button><svg class="i"><use href="#point"/></svg>Point</button>
  <button><svg class="i"><use href="#hex"/></svg>Polygon</button>
  <button><svg class="i"><use href="#hex"/></svg>Polygon ab</button>
  <button><svg class="i"><use href="#rect"/></svg>Rectangle</button>
  <button><svg class="i"><use href="#rhomb"/></svg>Rhomb</button>
  <button><svg class="i"><use href="#sector"/></svg>Sector</button>
  <button><svg class="i"><use href="#segment"/></svg>Segment</button>
  <button><svg class="i"><use href="#trapezoid"/></svg>Trapezoid</button>
  <button class="sub"><svg class="i"><use href="#curve"/></svg>Curve Profiles</button>
  <button class="sub"><svg class="i"><use href="#spiral"/></svg>Curve Spirals</button><hr>
  <button><svg class="i"><use href="#curly"/></svg>Curly Curve</button><hr>
  <button class="sub"><svg class="i"><use href="#curve"/></svg>Knots</button><hr>
  <button disabled><svg class="i"></svg>Add Curve as Bevel</button>
  <button disabled><svg class="i"></svg>Add Curve as Taper</button>
  <button><svg class="i"></svg>Simple Curve</button>
  <button class="hot"><svg class="i"><use href="#curve"/></svg>Sapling Tree Gen</button>
  <button disabled><svg class="i"><use href="#curve"/></svg>Curve Simplify</button>
</div>
<div class="tooltip" role="tooltip">(无文档记载的操作项).</div>
<div class="watermark">CSDN @vanTNT</div>
<script src="floor.js"></script>
</body>
</html>
```
FILE: styles.css
```css
* { box-sizing: border-box; }
body {
  margin: 0; height: 100vh; display: flex; flex-direction: column; overflow: hidden;
  background: #1d1d1d; color: #dedede; position: relative;
  font: 17px/24px Inter, "Noto Sans CJK SC", sans-serif;
}
p, h1 { margin: 0; font: inherit; }
button, input { font: inherit; color: inherit; background: none; border: 0; padding: 0; margin: 0; border-radius: 0; min-width: 0; }
button { display: flex; align-items: center; white-space: nowrap; }
svg { fill: none; stroke: currentColor; stroke-width: 1.5; flex: none; display: block; }
.sprite { position: absolute; width: 0; height: 0; }
.i { width: 22px; height: 22px; }
.big { width: 24px; height: 24px; }
.c { width: 10px; height: 10px; }
.f, .fill { fill: currentColor; stroke: none; }
.pupil { fill: var(--pupil, currentColor); }

.titlebar { height: 34px; flex: none; background: #fff; color: #000; display: flex; align-items: center; padding: 0 2px; }
.titlebar h1 { font: 18px/24px "Noto Sans", sans-serif; margin-left: 6px; flex: 1; }
.app-logo { width: 24px; height: 24px; color: #e87d0d; --pupil: #265787; }
.win-buttons { display: flex; }
.win-buttons button { width: 70px; height: 34px; justify-content: center; }
.win-buttons svg { stroke-width: 1; }

.topbar { height: 40px; flex: none; display: flex; align-items: flex-start; padding: 0 11px 0 14px; position: relative; }
.topbar .logo { height: 38px; width: 26px; }
.menus { display: flex; }
.menus button { padding: 0 11px; height: 38px; }
.tabs { display: flex; gap: 1px; margin: 8px 0 0 22px; color: #989898; }
.tabs button { padding: 0 14px; height: 30px; background: #212121; border-radius: 5px 5px 0 0; }
.tabs .on { background: #303030; color: #fff; }
.ime { display: flex; gap: 1px; position: absolute; left: 1168px; top: 5px; }
.ime button { width: 28px; height: 27px; background: #545454; justify-content: center; font-weight: bold; }
.ime button:first-child { border-radius: 5px 0 0 5px; }
.ime button:last-child { border-radius: 0 5px 5px 0; }
.idblock { display: flex; align-items: center; height: 29px; margin-top: 5px; border: 1px solid #3d3d3d; border-radius: 5px; overflow: hidden; background: #1d1d1d; }
.idblock.scene { margin-left: auto; margin-right: 7px; width: 278px; }
.idblock.layer { width: 278px; }
.idblock .dd { width: 45px; height: 27px; background: #282828; border-right: 1px solid #3d3d3d; justify-content: center; gap: 3px; }
.idblock input { flex: 1; padding-left: 11px; }
.idblock .pin { color: #666; margin-right: 6px; }
.idblock .new { width: 29px; height: 27px; background: #545454; justify-content: center; }
.idblock .del { width: 29px; height: 27px; background: #303030; color: #6a6a6a; justify-content: center; }

.workspace { flex: 1; min-height: 0; display: flex; gap: 3px; padding: 0 1px; }
.left { flex: 1; min-width: 0; display: flex; flex-direction: column; gap: 3px; }
.right { width: 442px; flex: none; display: flex; flex-direction: column; gap: 3px; }

.box, .group { height: 27px; border-radius: 5px; background: #282828; flex: none; box-shadow: 0 1px 1px #00000055; }
.box { justify-content: center; }
.dd { width: 44px; gap: 3px; }
.line { border: 1px solid #3d3d3d; height: 29px; }
.dd.line { width: 46px; }
.group { display: flex; gap: 1px; overflow: hidden; }
.group > button { width: 28px; height: 27px; justify-content: center; }
.group > .tog, .tog { background: #545454; width: 27px; }
.group > .tog.on { background: #4772b3; color: #fff; }
.sq { width: 29px; }

.viewport { flex: 1; min-height: 0; position: relative; background: #404040; border-radius: 7px; overflow: hidden; display: flex; flex-direction: column; }
.floor { position: absolute; inset: 0; width: 100%; height: 100%; }
.minor { stroke: #525252; stroke-width: 1; }
.major { stroke: #626262; stroke-width: 1; }
.axis-x { stroke: #a83c4b; stroke-width: 2; }
.axis-y { stroke: #5f842b; stroke-width: 2; }
.vhead { position: relative; height: 39px; background: #393939; display: flex; align-items: flex-start; padding: 5px 11px 0 12px; gap: 9px; }
.vhead .menus { margin: 0 -7px 0 -2px; }
.vhead .menus button, .thead .menus button { height: 27px; }
.mode { width: 157px; padding: 0 4px; }
.mode span { flex: 1; text-align: left; margin-left: 12px; }
.dim .i { opacity: .25; }
.orient { width: 114px; padding: 0 4px 0 6px; }
.orient span { flex: 1; text-align: left; margin-left: 10px; }
.snap { color: #aaa; }
.grow-a { flex: 368; margin-right: -9px; }
.grow-b { flex: 646; }
.vhead .tog:not(.on) { color: #b8b8b8; }
.vtools { position: relative; display: flex; justify-content: space-between; height: 36px; }
.corner { background: #393939; }
.tl { padding: 4px 12px 8px 11px; border-radius: 0 0 7px 0; }
.tr { padding: 4px 11px 8px 13px; border-radius: 0 0 0 7px; }
.sel .tog:not(.on) { color: #c0c0c0; }
.opt { width: 69px; gap: 14px; }
.vbody { position: relative; display: flex; align-items: flex-start; padding: 13px 13px 0 12px; }
.toolbar { display: flex; flex-direction: column; gap: 9px; width: 58px; }
.tg { border-radius: 5px; overflow: hidden; background: #282828; box-shadow: 0 1px 2px #0006; }
.tg button { width: 58px; height: 48px; justify-content: center; position: relative; }
.tg button + button { height: 50px; border-top: 1px solid #3d3d3d; }
.tg .on { background: #4772b3; }
.tg .more::after { content: ""; position: absolute; right: 3px; bottom: 3px; border: 3px solid; border-color: transparent #999 #999 transparent; }
.t { width: 36px; height: 36px; }
.vinfo { margin: -4px 0 0 26px; color: #fff; font-weight: 500; line-height: 28px; text-shadow: 0 1px 3px #000a; }
.nav { margin: 3px 0 0 auto; display: flex; flex-direction: column; align-items: flex-end; gap: 3px; }
.axes { margin-bottom: 3px; }
.axes text { font: bold 15px Inter, sans-serif; text-anchor: middle; stroke: none; }
.nav button { width: 42px; height: 42px; border-radius: 50%; background: #303030; justify-content: center; }
.cam { width: 24px; height: 24px; }
.sidetab { position: absolute; right: 0; top: 97px; width: 12px; height: 20px; background: #333; border-radius: 4px 0 0 4px; color: #999; justify-content: center; }

.timeline { flex: none; background: #303030; border-radius: 7px; overflow: hidden; }
.thead { height: 37px; display: flex; align-items: flex-start; padding: 4px 11px 0 11px; gap: 9px; }
.thead .dd.line { width: 44px; }
.thead .group.line { gap: 0; }
.thead .txt { width: auto; padding: 0 4px 0 10px; gap: 10px; }
.thead .txt + .txt { border-left: 1px solid #3d3d3d; }
.thead .menus { margin: 0 -9px 0 -5px; }
.thead .rec, .thead .play, .thead .range, .frame { margin-top: 1px; height: 27px; }
.play > .tog { width: 28px; }
.off { color: #666; background: #2b2b2b; }
.grow-c { flex: 568; margin-right: -9px; }
.grow-d { flex: 532; margin-right: -9px; }
.frame { width: 106px; background: #545454; border-radius: 5px; text-align: center; }
.range label { background: #545454; width: 127px; display: flex; align-items: center; padding: 0 21px 0 23px; }
.range .end { width: 141px; }
.range label input { width: 30px; flex: 1; text-align: right; }
.track { position: relative; height: 71px; background: linear-gradient(#1f1f1f 35px, #262626 35px); }
.ruler, .lanes { display: grid; grid-template-columns: repeat(25, 1fr); margin: 0 38px 0 109px; color: #989898; }
.ruler { height: 35px; line-height: 35px; text-align: center; }
.lanes { height: 36px; background: #303030; position: relative; }
.lanes::before { content: ""; position: absolute; right: 100%; width: 31px; height: 36px; background: #303030; }
.lanes i { background: linear-gradient(#1b1b1b, #1b1b1b) 50% 0 / 1px 100% no-repeat; border-left: 1px solid #282828; }
.lanes .last { background: linear-gradient(#1b1b1b, #1b1b1b) 50% 0 / 1px 100% no-repeat, linear-gradient(90deg, #303030 50%, #262626 50%); }
.playhead { position: absolute; left: 59px; top: 4px; width: 37px; height: 67px; color: #fff; text-align: center; line-height: 27px; background: linear-gradient(#4772b3, #4772b3) 50% 0 / 2px 100% no-repeat; }
.playhead span { display: block; background: #4772b3; border-radius: 5px; height: 27px; }
.hscroll { position: absolute; left: 12px; right: 14px; bottom: 3px; height: 13px; border-radius: 7px; background: #545454; }
.hscroll::before, .hscroll::after { content: ""; position: absolute; top: 2px; width: 9px; height: 9px; border-radius: 50%; background: #303030; left: 2px; }
.hscroll::after { left: auto; right: 2px; }
.edge { position: absolute; top: 24px; color: #888; }
.edge.l { left: 0; }
.edge.r { right: 0; }

.outliner { height: 460px; flex: none; border-radius: 7px; overflow: hidden; position: relative; background: #2b2b2b; }
.ohead { height: 38px; display: flex; align-items: flex-start; gap: 7px; padding: 4px 11px; }
.find { display: flex; align-items: center; width: 174px; height: 29px; background: #1d1d1d; border: 1px solid #3d3d3d; border-radius: 5px; padding-left: 6px; }
.find input { width: 130px; }
.ohead .find { margin: 0 auto 0 15px; }
.ohead .sq { height: 29px; width: 29px; }
.tree { height: 422px; background: repeating-linear-gradient(#2b2b2b 0 29px, #2e2e2e 29px 58px); color: #c0c0c0; }
.row { height: 29px; display: flex; align-items: center; }
.root { padding-left: 33px; gap: 8px; }
.child { padding: 0 18px 0 58px; gap: 5px; }
.name { padding-top: 2px; }
.row .i { color: #d8d8d8; }
.row b { width: 29px; height: 27px; background: #545454; border-radius: 7px; display: grid; place-items: center; }
.toggles { margin-left: auto; display: flex; align-items: center; gap: 8px; }
.toggles button { width: 21px; }
.check { appearance: none; width: 15px; height: 15px; border-radius: 2px; display: grid; place-items: center; }
.check::before { content: ""; width: 10px; height: 5px; border: solid; border-width: 0 0 2px 2px; transform: rotate(-45deg); margin-top: -3px; }
.light { background: #e6e6e6; color: #222; margin-right: 1px; }
.blue { background: #4772b3; color: #fff; width: 19px; height: 19px; border-radius: 3px; }
.vscroll { position: absolute; right: 2px; top: 173px; width: 8px; height: 72px; border-radius: 4px; background: #606060; display: flex; align-items: flex-end; justify-content: center; }
.vscroll i { width: 5px; height: 37px; border-radius: 3px; background: linear-gradient(#6fc3ff, #4080ff); }

.props { flex: 1; min-height: 0; background: #303030; border-radius: 7px; overflow: hidden; display: flex; flex-direction: column; }
.phead { height: 36px; flex: none; display: flex; align-items: flex-start; padding: 4px 10px 0 11px; justify-content: space-between; }
.phead .line, .phead .find { height: 28px; }
.phead .find { margin-right: 20px; }
.pbody { flex: 1; display: flex; }
.ptabs { width: 43px; flex: none; background: #1f1f1f; color: #aaa; padding-left: 5px; }
.pt { border-bottom: 1px solid #181818; padding: 12px 0 0; }
.pt:first-child { padding-top: 14px; }
.pt button { width: 38px; height: 38px; justify-content: center; border-radius: 5px 0 0 5px; }
.pt button + button { margin-top: 2px; }
.pt button.on { background: #303030; color: #d0d0d0; }
.pt .red { color: #b0535b; }
.pt .lit { color: #e0e0e0; }
.panels { flex: 1; min-width: 0; padding: 0 12px 0 11px; display: flex; flex-direction: column; gap: 2px; }
.crumbs { display: flex; align-items: center; height: 54px; padding: 0 2px 0 5px; }
.crumbs span { margin-left: 13px; }
.crumbs .sep { margin: 0 11px 0 23px; }
.crumbs .pin { margin-left: auto; color: #888; }
.panel { background: #3d3d3d; border-radius: 5px; }
.open { padding-bottom: 13px; }
.ph { width: 100%; height: 36px; display: flex; align-items: center; padding: 0 11px 0 14px; text-align: left; }
.arr { width: 10px; height: 16px; color: #aaa; margin-right: 7px; }
.open .arr { transform: rotate(90deg); }
.ph .check { margin: 0 4px 0 -1px; }
.ph em { margin-left: auto; width: 16px; height: 8px; background: radial-gradient(circle, #999 1px, transparent 1px) 0 0 / 4px 4px; }
.fields { display: grid; grid-template-columns: 146px minmax(0, 1fr); column-gap: 15px; row-gap: 9px; padding: 13px 13px 0 0; }
.fields label { text-align: right; line-height: 27px; }
.field { height: 27px; background: #1d1d1d; border-radius: 5px; display: flex; align-items: center; padding: 0 5px 0 6px; }
.field input { flex: 1; width: 0; }
.drop { color: #aaa; }

.status { height: 30px; flex: none; display: flex; justify-content: space-between; align-items: center; padding: 0 19px 0 12px; color: #838383; }
.stats { display: flex; font-variant-numeric: tabular-nums; }
.stats span + span { border-left: 1px solid #838383; margin-left: 7px; padding-left: 7px; line-height: 20px; }

.popup { position: absolute; display: flex; flex-direction: column; background: #1b1b1b; border: 1px solid #242424; border-radius: 6px; box-shadow: 0 2px 6px #0008; padding: 4px 0; }
.popup button { margin: 1px 4px; height: 27px; flex: none; padding: 0 5px 0 10px; border-radius: 5px; color: #dcdcdc; text-shadow: 0 1px 2px #000; }
.popup .i, .glyph { margin-right: 10px; width: 22px; }
.popup hr { width: 100%; border: 0; border-top: 1px solid #303030; margin: 5px 0 4px; }
.popup button.hot { background: #3e3e3e; color: #fff; }
.popup button:disabled { color: #6a6a6a; }
.popup button:disabled .i { opacity: .6; }
.sub::after { content: ""; margin-left: auto; border: solid transparent; border-width: 5px 0 5px 9px; border-left-color: #8a8a8a; }
.title { height: 29px; line-height: 29px; padding-left: 12px; color: #989898; }
.up { height: 22px; display: grid; place-items: center; color: #777; }
.add-menu { left: 819px; top: 754px; width: 262px; }
.popup.add-menu button { padding-left: 11px; }
.curve-menu { left: 1081px; top: 49px; width: 270px; padding-top: 0; }
.glyph { font: bold 38px/22px "Liberation Serif", serif; height: 32px; text-align: center; }
.tooltip { position: absolute; left: 1244px; top: 880px; height: 45px; line-height: 45px; padding: 0 18px; background: #1d1d1d; border: 1px solid #262626; border-radius: 5px; box-shadow: 0 2px 6px #0008; }
.watermark { position: absolute; right: 3px; bottom: 12px; font: 49px/60px Roboto, sans-serif; color: #c8c8c8; }
```
FILE: floor.js
```js
// Perspective floor grid: one line per metre, a brighter one every ten.
(function () {
  var view = document.getElementById('viewport');
  var elevation = 26.83 * Math.PI / 180, turn = 19.03 * Math.PI / 180;
  var se = Math.sin(elevation), ce = Math.cos(elevation);
  var st = Math.sin(turn), ct = Math.cos(turn);
  var right = [st, ct, 0];
  var up = [-se * ct, se * st, ce];
  var back = [ce * ct, -ce * st, se];
  var eye = [0, 1, 2].map(function (k) {
    return back[k] * 17.74 - right[k] * 0.484 + up[k] * 0.565;
  });

  function dot(a, b) { return a[0] * b[0] + a[1] * b[1] + a[2] * b[2]; }

  function toCamera(p) {
    var d = [p[0] - eye[0], p[1] - eye[1], p[2] - eye[2]];
    return [dot(right, d), dot(up, d), -dot(back, d)];
  }

  function segment(a, b, w, h) {
    var near = 0.5, f = w * 50 / 72;
    a = toCamera(a);
    b = toCamera(b);
    if (a[2] < near && b[2] < near) return '';
    function clip(p, q) {
      if (p[2] >= near) return p;
      var t = (near - p[2]) / (q[2] - p[2]);
      return [p[0] + t * (q[0] - p[0]), p[1] + t * (q[1] - p[1]), near];
    }
    var p = clip(a, b), q = clip(b, a);
    function px(v) {
      return (w / 2 + f * v[0] / v[2]).toFixed(1) + ' ' + (h / 2 - f * v[1] / v[2]).toFixed(1);
    }
    return 'M' + px(p) + 'L' + px(q);
  }

  function draw() {
    var w = view.clientWidth, h = view.clientHeight, far = 600, minor = '', major = '';
    for (var i = -160; i <= 160; i++) {
      if (i === 0) continue;
      var s = segment([-far, i, 0], [far, i, 0], w, h) + segment([i, -far, 0], [i, far, 0], w, h);
      if (i % 10 === 0) major += s; else if (Math.abs(i) < 90) minor += s;
    }
    document.getElementById('minor').setAttribute('d', minor);
    document.getElementById('major').setAttribute('d', major);
    document.getElementById('axis-x').setAttribute('d', segment([-far, 0, 0], [far, 0, 0], w, h));
    document.getElementById('axis-y').setAttribute('d', segment([0, -far, 0], [0, far, 0], w, h));
  }

  draw();
  window.addEventListener('resize', draw);
})();
```
